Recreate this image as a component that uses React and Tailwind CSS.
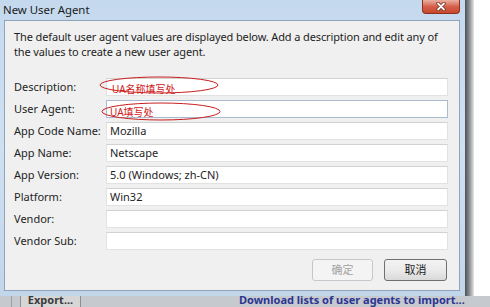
import React from "react";

const rows = [
  { label: "Description:", value: "" },
  { label: "User Agent:", value: "", focused: true },
  { label: "App Code Name:", value: "Mozilla" },
  { label: "App Name:", value: "Netscape" },
  { label: "App Version:", value: "5.0 (Windows; zh-CN)" },
  { label: "Platform:", value: "Win32" },
  { label: "Vendor:", value: "" },
  { label: "Vendor Sub:", value: "" },
];

const CloseButton = () => (
  <div className="w-[38px] h-[14px] rounded-b-[4px] border border-t-0 border-[#8a3322] bg-gradient-to-b from-[#eab0a2] via-[#d4604c] to-[#c9472c] flex items-center justify-center">
    <svg width="10" height="9" viewBox="0 0 10 9">
      <path d="M2 1.5 L8 7.5 M8 1.5 L2 7.5" stroke="#6a2416" strokeWidth="3.2" strokeLinecap="round" />
      <path d="M2 1.5 L8 7.5 M8 1.5 L2 7.5" stroke="#ffffff" strokeWidth="1.8" strokeLinecap="round" />
    </svg>
  </div>
);

const Annotations = () => (
  <div className="absolute inset-0 pointer-events-none">
    <svg width="490" height="307" className="absolute left-0 top-0">
      <ellipse cx="159" cy="85" rx="59" ry="8" fill="none" stroke="#c81e1e" strokeWidth="1" />
      <ellipse cx="161" cy="111.5" rx="59" ry="8.5" fill="none" stroke="#c81e1e" strokeWidth="1" />
    </svg>
    <span className="absolute left-[112px] top-[83px] text-[10px] leading-[12px] text-[#d01818]">UA名称填写处</span>
    <span className="absolute left-[110px] top-[106px] text-[10px] leading-[12px] text-[#d01818]">UA填写处</span>
  </div>
);

export default function App() {
  return (
    <div className="relative w-[490px] h-[307px] overflow-hidden bg-white flex flex-col font-['Noto_Sans','Noto_Sans_CJK_SC',sans-serif] text-[11px] text-[#1e1e1e]">
      <div className="flex h-[296px] shrink-0">
        <div className="w-[465px] h-full flex flex-col bg-gradient-to-b from-[#c5d9ee] via-[#cfe0f1] to-[#c2d6ea]">
          <div className="h-[20px] shrink-0 flex items-start justify-between pl-[3px] pr-[5px]">
            <span className="mt-[2px] leading-[16px] text-[11.4px] text-[#1a1a1a]">New User Agent</span>
            <CloseButton />
          </div>
          <div className="ml-[4px] mr-[5px] h-[271px] shrink-0 border border-[#8fa3ba] bg-[#f0f0f0] flex flex-col">
            <p className="pl-[9px] pt-[8px] leading-[15px] tracking-[-0.12px] whitespace-nowrap text-[#1e1e1e]">
              The default user agent values are displayed below. Add a description and edit any of
              <br />
              the values to create a new user agent.
            </p>
            <div className="mt-[19px] pl-[9px] pr-[11px] flex flex-col gap-[4px]">
              {rows.map((r) => (
                <div key={r.label} className="flex items-center h-[18px]">
                  <span className="w-[92px] shrink-0 whitespace-nowrap text-[#1e1e1e]">{r.label}</span>
                  <div
                    className={
                      r.focused
                        ? "flex-1 h-[18px] border border-[#a9bccf] bg-white flex items-center pl-[3px]"
                        : "flex-1 h-[18px] border border-[#e2e2e2] border-t-[#d2d2d2] bg-white flex items-center pl-[3px]"
                    }
                  >
                    {r.value}
                  </div>
                </div>
              ))}
            </div>
            <div className="mt-[9px] pr-[12px] flex justify-end gap-[11px]">
              <div className="w-[61px] h-[22px] rounded-[3px] border border-[#c4c8cc] bg-[#f4f4f4] flex items-center justify-center text-[#a2a2a2]">
                确定
              </div>
              <div className="w-[63px] h-[22px] rounded-[3px] border border-[#707070] bg-gradient-to-b from-[#f3f3f3] via-[#ebebeb] to-[#d9d9d9] flex items-center justify-center text-[#1a1a1a]">
                取消
              </div>
            </div>
          </div>
        </div>
        <div className="w-[9px] h-full bg-gradient-to-r from-[#4e5054] via-[#8e9194] to-[#e6e6e6]" />
        <div className="flex-1 h-full bg-white" />
      </div>
      <div className="flex-1 flex items-start bg-[#c6c9cd] overflow-hidden">
        <div className="w-[12px] h-full border-r border-[#9a9da2]" />
        <div className="w-[8px] h-full" />
        <div className="w-[61px] h-full bg-[#d6d6d6] border-x border-[#8d9094] flex justify-center overflow-hidden">
          <span className="-mt-[2px] leading-[12px] font-bold text-[11px] text-[#3a3a3a]">Export...</span>
        </div>
        <div className="w-[158px] h-full" />
        <span className="-mt-[2px] leading-[12px] whitespace-nowrap font-bold text-[11px] text-[#2c3592]">Download lists of user agents to import...</span>
      </div>
      <Annotations />
    </div>
  );
}
